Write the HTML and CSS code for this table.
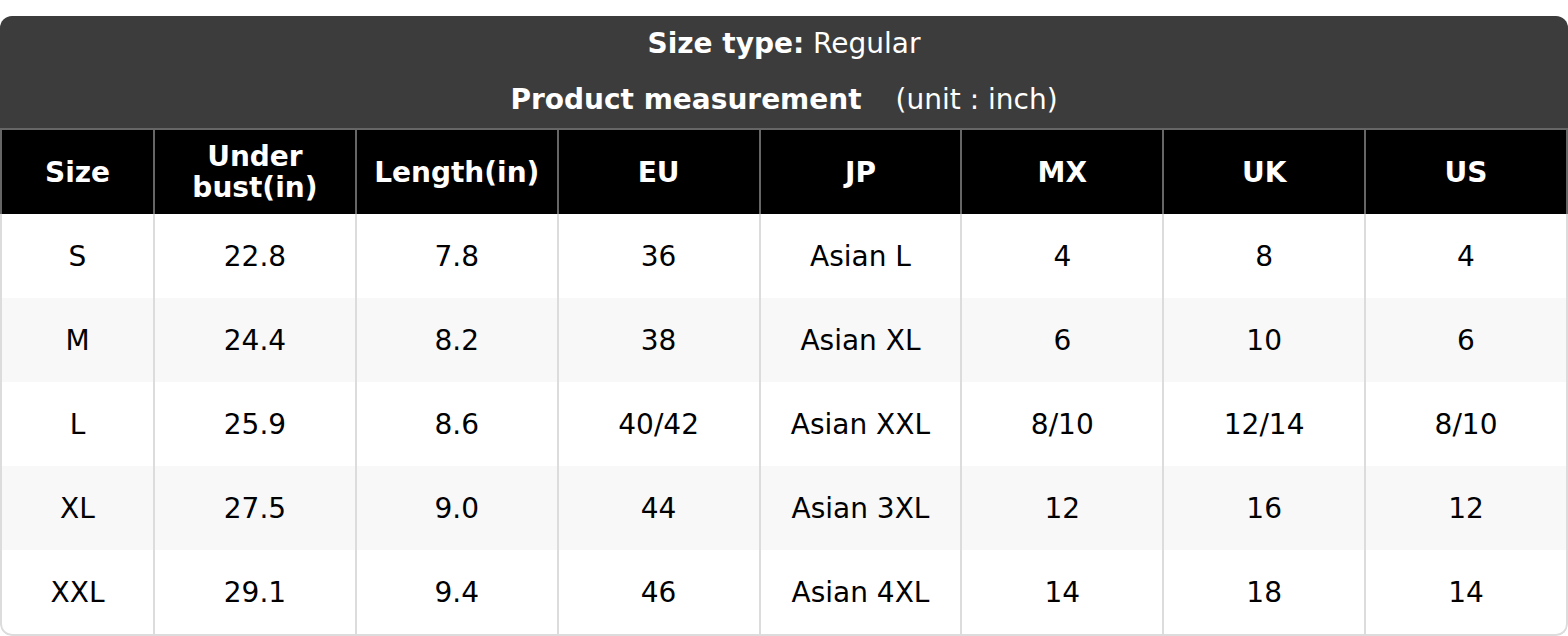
FILE: index.html
```html
<!DOCTYPE html>
<html lang="en">
<head>
<meta charset="utf-8">
<title>Size chart</title>
<link rel="stylesheet" href="styles.css">
</head>
<body>
<div class="chart">
  <div class="chart-head">
    <div class="head-line"><b>Size type:</b> Regular</div>
    <div class="head-line"><b>Product measurement</b><span class="unit">(unit : inch)</span></div>
  </div>
  <table class="size-table">
    <colgroup>
      <col class="col-first">
      <col><col><col><col><col><col><col>
    </colgroup>
    <thead>
      <tr>
        <th>Size</th>
        <th>Under<br>bust(in)</th>
        <th>Length(in)</th>
        <th>EU</th>
        <th>JP</th>
        <th>MX</th>
        <th>UK</th>
        <th>US</th>
      </tr>
    </thead>
    <tbody>
      <tr><td>S</td><td>22.8</td><td>7.8</td><td>36</td><td>Asian L</td><td>4</td><td>8</td><td>4</td></tr>
      <tr><td>M</td><td>24.4</td><td>8.2</td><td>38</td><td>Asian XL</td><td>6</td><td>10</td><td>6</td></tr>
      <tr><td>L</td><td>25.9</td><td>8.6</td><td>40/42</td><td>Asian XXL</td><td>8/10</td><td>12/14</td><td>8/10</td></tr>
      <tr><td>XL</td><td>27.5</td><td>9.0</td><td>44</td><td>Asian 3XL</td><td>12</td><td>16</td><td>12</td></tr>
      <tr><td>XXL</td><td>29.1</td><td>9.4</td><td>46</td><td>Asian 4XL</td><td>14</td><td>18</td><td>14</td></tr>
    </tbody>
  </table>
</div>
</body>
</html>
```

FILE: styles.css
```css
html, body {
  margin: 0;
  padding: 0;
  background: #ffffff;
}

body {
  font-family: "DejaVu Sans", "Liberation Sans", sans-serif;
  font-size: 28px;
  color: #000;
}

.chart {
  margin-top: 16px;
  width: 1568px;
  border-radius: 12px;
  overflow: hidden;
}

.chart-head {
  background: #3c3c3c;
  color: #ffffff;
  height: 112px;
  text-align: center;
}

.head-line {
  height: 56px;
  line-height: 56px;
}

.head-line b {
  font-weight: bold;
}

.unit {
  margin-left: 34px;
}

.size-table {
  width: 100%;
  table-layout: fixed;
  border-collapse: separate;
  border-spacing: 0;
}

.col-first {
  width: 155px;
}

.size-table th,
.size-table td {
  text-align: center;
  vertical-align: middle;
  padding: 0;
  box-sizing: border-box;
}

.size-table th {
  background: #000;
  color: #fff;
  font-weight: bold;
  height: 86px;
  line-height: 31px;
  border-top: 2px solid #666;
  border-right: 2px solid #666;
}

.size-table th:first-child {
  border-left: 2px solid #666;
}

.size-table td {
  height: 84px;
  padding-top: 1px;
  line-height: 32px;
  border-right: 2px solid #dcdcdc;
}

.size-table td:first-child {
  border-left: 2px solid #dcdcdc;
}

.size-table tbody tr:nth-child(even) td {
  background: #f8f8f8;
}

.size-table tbody tr:last-child td {
  height: 86px;
  border-bottom: 2px solid #dcdcdc;
}

.size-table tbody tr:last-child td:first-child {
  border-bottom-left-radius: 12px;
}

.size-table tbody tr:last-child td:last-child {
  border-bottom-right-radius: 12px;
}
```
